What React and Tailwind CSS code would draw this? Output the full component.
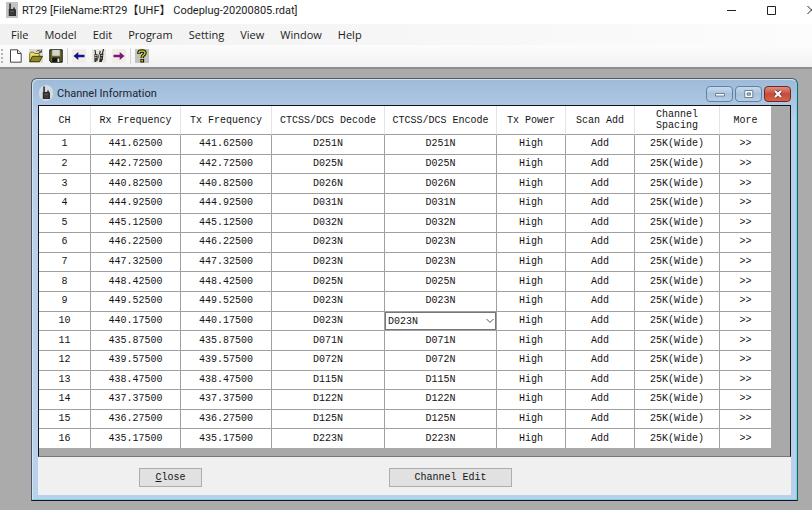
import { useState } from 'react'

const menuItems = ['File', 'Model', 'Edit', 'Program', 'Setting', 'View', 'Window', 'Help']

const headers = [
  'CH',
  'Rx Frequency',
  'Tx Frequency',
  'CTCSS/DCS Decode',
  'CTCSS/DCS Encode',
  'Tx Power',
  'Scan Add',
  'Channel Spacing',
  'More'
]

const channels = [
  { ch: 1, freq: '441.62500', tone: 'D251N' },
  { ch: 2, freq: '442.72500', tone: 'D025N' },
  { ch: 3, freq: '440.82500', tone: 'D026N' },
  { ch: 4, freq: '444.92500', tone: 'D031N' },
  { ch: 5, freq: '445.12500', tone: 'D032N' },
  { ch: 6, freq: '446.22500', tone: 'D023N' },
  { ch: 7, freq: '447.32500', tone: 'D023N' },
  { ch: 8, freq: '448.42500', tone: 'D025N' },
  { ch: 9, freq: '449.52500', tone: 'D023N' },
  { ch: 10, freq: '440.17500', tone: 'D023N' },
  { ch: 11, freq: '435.87500', tone: 'D071N' },
  { ch: 12, freq: '439.57500', tone: 'D072N' },
  { ch: 13, freq: '438.47500', tone: 'D115N' },
  { ch: 14, freq: '437.37500', tone: 'D122N' },
  { ch: 15, freq: '436.27500', tone: 'D125N' },
  { ch: 16, freq: '435.17500', tone: 'D223N' }
]

const tones = [...new Set(channels.map((c) => c.tone))]

function RadioIcon({ className }) {
  return (
    <svg viewBox="0 0 13 14" className={className} aria-hidden="true">
      <path d="M3.6 0h1.6v6H3.6z" fill="#222" />
      <path d="M3 6h7.2l.6 1v6.5H3z" fill="#2c2c2c" />
      <path d="M7.8 4.2h1.8V6H7.8z" fill="#333" />
      <path d="M4.5 7.5H9v2H4.5z" fill="#555" />
      <path d="M4.5 10.5h4.5M4.5 12h4.5" stroke="#555" strokeWidth=".6" />
    </svg>
  )
}

function NewIcon() {
  return (
    <svg viewBox="0 0 14 14" className="h-3.5 w-3.5" aria-hidden="true">
      <path d="M1.5.8h7l3.7 3.7v8.7H1.5z" fill="#fff" stroke="#444" />
      <path d="M8.5.8v3.7h3.7" fill="#ddd" stroke="#444" />
    </svg>
  )
}

function OpenIcon() {
  return (
    <svg viewBox="0 0 14 14" className="h-3.5 w-3.5" aria-hidden="true">
      <path d="M0 0h14v14H0z" fill="#dedcd0" />
      <path d="M.7 12.5v-8L2 3.2h2.6l1 1.3h4.7v2.7" fill="#eadf63" stroke="#77702a" />
      <path d="M.7 12.7 3.4 7.3h10.1l-3 5.4z" fill="#8f8720" stroke="#3d3a10" />
      <path d="M7.5 2.5c1.2-1.6 3-1.5 4 .3M12.3.7v2.6H9.7" fill="none" stroke="#333" />
    </svg>
  )
}

function SaveIcon() {
  return (
    <svg viewBox="0 0 14 14" className="h-3.5 w-3.5" aria-hidden="true">
      <path d="M.8.8h12.4v12.4H2L.8 12z" fill="#69692a" stroke="#111" />
      <path d="M3.2 1h7.6v5.8H3.2z" fill="#d5d5d0" />
      <path d="M3.2 8.5h8V13h-8z" fill="#151515" />
      <path d="M8.5 9.5h1.8V13H8.5z" fill="#eee" />
    </svg>
  )
}

function ArrowIcon({ flip, color }) {
  return (
    <svg viewBox="0 0 14 14" className="h-3.5 w-3.5" aria-hidden="true">
      <path d="M0 0h14v14H0z" fill="#f1eee8" />
      <g fill={color} transform={flip ? 'translate(14 0) scale(-1 1)' : undefined}>
        <path d="M1.5 7 6.3 3v2.8h6.2v2.5H6.3V11z" />
      </g>
    </svg>
  )
}

function TwoRadiosIcon() {
  return (
    <svg viewBox="0 0 14 14" className="h-3.5 w-3.5" aria-hidden="true">
      <path d="M0 0h14v14H0z" fill="#e9e6dd" />
      <path d="m3 1 .6 4M11.5 0l-1.2 5M8.3 2l-.8 3" stroke="#222" strokeWidth="1.1" />
      <path d="M2.4 5h3l.4 4-1.6 4H2.4z" fill="#393939" />
      <path d="m8.2 5 3.2-.5-.6 6-1.2 2.5H7.2z" fill="#252525" />
      <path d="M3 6.5h1.8M8.8 6.5h1.8M3 8.5h1.6M8.4 9h1.6" stroke="#ddd" strokeWidth=".8" />
      <path d="m7.2 5-2 7" stroke="#444" strokeWidth=".8" />
    </svg>
  )
}

function HelpIcon() {
  return (
    <svg viewBox="0 0 14 14" className="h-3.5 w-3.5" aria-hidden="true">
      <path d="M0 0h14v14H0z" fill="#c3c3be" />
      <path d="M4 5V3.5Q4.2 2 7 2t3 1.8Q10 5.3 8.5 6.2 7.2 7 7.2 9" fill="none" stroke="#16160c" strokeWidth="3.4" />
      <path d="M4 4.6V3.5Q4.2 2 7 2t3 1.8Q10 5.3 8.5 6.2 7.2 7 7.2 8.7" fill="none" stroke="#c5c51f" strokeWidth="1.5" />
      <path d="M5.4 10h3.7v3.5H5.4z" fill="#16160c" />
      <path d="M6.3 10.8H8v1.8H6.3z" fill="#c5c51f" />
    </svg>
  )
}

function ToolButton({ label, children }) {
  return (
    <button aria-label={label} className="flex h-5 w-5 items-center justify-center">
      {children}
    </button>
  )
}

function TitleBar() {
  return (
    <header className="flex h-6 items-center overflow-hidden bg-white pl-1.5">
      <span className="-mt-1 flex h-4 w-3 shrink-0 items-center bg-[#c4c4c4]">
        <RadioIcon className="h-3.5 w-3" />
      </span>
      <h1 className="ml-1 grow whitespace-pre pb-0.5 font-[Roboto,'Noto_Sans_CJK_SC',sans-serif] text-[11px] leading-4">
        RT29 [FileName:RT29【UHF】 Codeplug-20200805.rdat]
      </h1>
      <div className="-mr-5 flex shrink-0 pb-1">
        <button aria-label="Minimize" className="flex h-5 w-10 items-center justify-center">
          <svg viewBox="0 0 10 10" className="h-2.5 w-2.5">
            <path d="M0 5.5h9" stroke="#222" />
          </svg>
        </button>
        <button aria-label="Maximize" className="flex h-5 w-10 items-center justify-center">
          <svg viewBox="0 0 10 10" className="h-2.5 w-2.5">
            <path d="M.5 1.5h8v8h-8z" fill="none" stroke="#222" />
          </svg>
        </button>
        <button aria-label="Close window" className="flex h-5 w-10 items-center justify-center">
          <svg viewBox="0 0 10 10" className="h-2.5 w-2.5">
            <path d="m.5 1 8 8M8.5 1l-8 8" stroke="#222" />
          </svg>
        </button>
      </div>
    </header>
  )
}

function Toolbar() {
  return (
    <div className="flex h-[22px] items-center bg-gradient-to-b from-[#fcfcfc] to-[#f1f1f1] pl-px">
      <span className="mr-[3px] h-3.5 border-l-2 border-dotted border-[#b5b5b5]"></span>
      <ToolButton label="New"><NewIcon /></ToolButton>
      <ToolButton label="Open"><OpenIcon /></ToolButton>
      <ToolButton label="Save"><SaveIcon /></ToolButton>
      <span className="mx-px h-4 border-l border-[#d4d4d4]"></span>
      <ToolButton label="Read from radio"><ArrowIcon color="#13138c" /></ToolButton>
      <ToolButton label="Radio"><TwoRadiosIcon /></ToolButton>
      <ToolButton label="Write to radio"><ArrowIcon flip color="#7d1580" /></ToolButton>
      <span className="mx-px h-4 border-l border-[#d4d4d4]"></span>
      <ToolButton label="Help"><HelpIcon /></ToolButton>
    </div>
  )
}

function ChildTitleBar() {
  const glass =
    'flex h-4 w-[27px] items-center justify-center rounded-sm border border-[#63819f] bg-gradient-to-b from-[#c6daee] via-[#a8c2dd] to-[#b6cde5]'

  return (
    <div className="flex h-[25px] items-center pl-px">
      <span className="flex h-4 w-3.5 items-center justify-center rounded-full bg-[#d3dbe2]">
        <RadioIcon className="h-3.5 w-3" />
      </span>
      <h2 className="ml-1 grow pt-0.5 font-[Roboto,'Noto_Sans_CJK_SC',sans-serif] text-[11px] leading-4 text-[#1a2430]">
        Channel Information
      </h2>
      <div className="flex gap-0.5 pt-0.5">
        <button aria-label="Minimize" className={glass}>
          <svg viewBox="0 0 12 10" className="h-2.5 w-3">
            <path d="M1.5 4.5h9V7h-9z" fill="#fff" stroke="#54687e" strokeWidth=".8" />
          </svg>
        </button>
        <button aria-label="Restore" className={glass}>
          <svg viewBox="0 0 12 10" className="h-2.5 w-3">
            <path d="M1.8 1.5h8v7h-8z" fill="#fff" stroke="#54687e" strokeWidth=".8" />
            <path d="M4.2 3.9h3.2v2.3H4.2z" fill="#a8c2dd" stroke="#54687e" strokeWidth=".8" />
          </svg>
        </button>
        <button
          aria-label="Close channel window"
          className="flex h-4 w-[27px] items-center justify-center rounded-sm border border-[#6d2a22] bg-gradient-to-b from-[#dc9081] via-[#c8493a] to-[#d5644c]"
        >
          <svg viewBox="0 0 12 10" className="h-2.5 w-3">
            <path d="m3 2 6 6M9 2 3 8" stroke="#653a3a" strokeWidth="3.4" />
            <path d="m3 2 6 6M9 2 3 8" stroke="#fff" strokeWidth="2" />
          </svg>
        </button>
      </div>
    </div>
  )
}

function ChannelTable() {
  const [encode, setEncode] = useState('D023N')

  return (
    <table className="h-[342px] w-[732px] table-fixed border-separate border-spacing-0 bg-white text-center">
      <colgroup>
        <col className="w-[52px]" />
        <col className="w-[90px]" />
        <col className="w-[91px]" />
        <col className="w-[113px]" />
        <col className="w-[112px]" />
        <col className="w-[69px]" />
        <col className="w-[69px]" />
        <col className="w-[85px]" />
        <col className="w-[51px]" />
      </colgroup>
      <thead>
        <tr className="h-[29px]">
          {headers.map((header) => (
            <th
              key={header}
              className="border-r border-b border-r-[#e4e4e4] border-b-[#a0a0a0] px-1 py-0 leading-[11px] font-normal last:border-r-0 nth-[8]:px-4"
            >
              {header}
            </th>
          ))}
        </tr>
      </thead>
      <tbody className="[&_td]:border-r [&_td]:border-b [&_td]:border-[#a0a0a0] [&_td]:p-0 [&_td]:leading-[18px] [&_td:last-child]:border-r-0 [&_tr:last-child_td]:border-b-0">
        {channels.map((c) => (
          <tr key={c.ch}>
            <td>{c.ch}</td>
            <td>{c.freq}</td>
            <td>{c.freq}</td>
            <td>{c.tone}</td>
            <td>
              {c.ch === 10 ? (
                <div className="relative">
                  <select
                    aria-label="CTCSS/DCS Encode, channel 10"
                    value={encode}
                    onChange={(e) => setEncode(e.target.value)}
                    className="block h-[18px] w-full appearance-none border border-[#777] bg-white pl-0.5 text-left"
                  >
                    {tones.map((tone) => (
                      <option key={tone}>{tone}</option>
                    ))}
                  </select>
                  <svg viewBox="0 0 8 6" className="pointer-events-none absolute top-1.5 right-0.5 h-1.5 w-2">
                    <path d="m.5 1 3.5 3.5L7.5 1" fill="none" stroke="#555" />
                  </svg>
                </div>
              ) : (
                c.tone
              )}
            </td>
            <td>High</td>
            <td>Add</td>
            <td>25K(Wide)</td>
            <td>
              <button aria-label={`More, channel ${c.ch}`} className="block w-full">&gt;&gt;</button>
            </td>
          </tr>
        ))}
      </tbody>
    </table>
  )
}

export default function App() {
  return (
    <div className="flex min-h-screen flex-col bg-[#ababab] font-['Open_Sans','Noto_Sans_CJK_SC',sans-serif] text-[#1c1c1c]">
      <TitleBar />
      <nav className="flex h-[21px] items-center gap-4 bg-gradient-to-r from-[#f1f1f1] to-[#fcfcfc] pl-[11px] text-[11px] leading-4">
        {menuItems.map((item) => (
          <button key={item}>{item}</button>
        ))}
      </nav>
      <Toolbar />

      <main className="grow border-t-2 border-[#8d8d8d] pt-[9px] pr-3.5 pb-2 pl-[31px]">
        <section className="rounded-t-md border border-t-[#4d5b68] border-r-[#1e5f70] border-b-[#101820] border-l-[#4a5661] bg-gradient-to-b from-[#9dbad8] via-[#b9d1ea] via-10% to-[#b9d1ea]">
          <div className="rounded-t-md border border-t-[#d3e3f2] border-r-[#79d3e4] border-b-[#79d3e4] border-l-[#d3e3f2] px-[5px] pb-1">
            <ChildTitleBar />
            <div className="bg-[#f0f0f0] font-['Liberation_Mono','Noto_Sans_CJK_SC',monospace] text-[10px] text-[#141414]">
              <div className="overflow-x-auto border border-[#101418] border-b-[#777] bg-[#a9a9a9] pb-2">
                <ChannelTable />
              </div>
              <div className="flex h-[38px] items-center pt-0.5 pl-[101px]">
                <button className="h-[19px] w-[63px] border border-[#adadad] bg-[#e1e1e1]">
                  <span className="underline">C</span>lose
                </button>
                <button className="ml-[187px] h-[19px] w-[123px] border border-[#adadad] bg-[#e1e1e1]">
                  Channel Edit
                </button>
              </div>
            </div>
          </div>
        </section>
      </main>
    </div>
  )
}
